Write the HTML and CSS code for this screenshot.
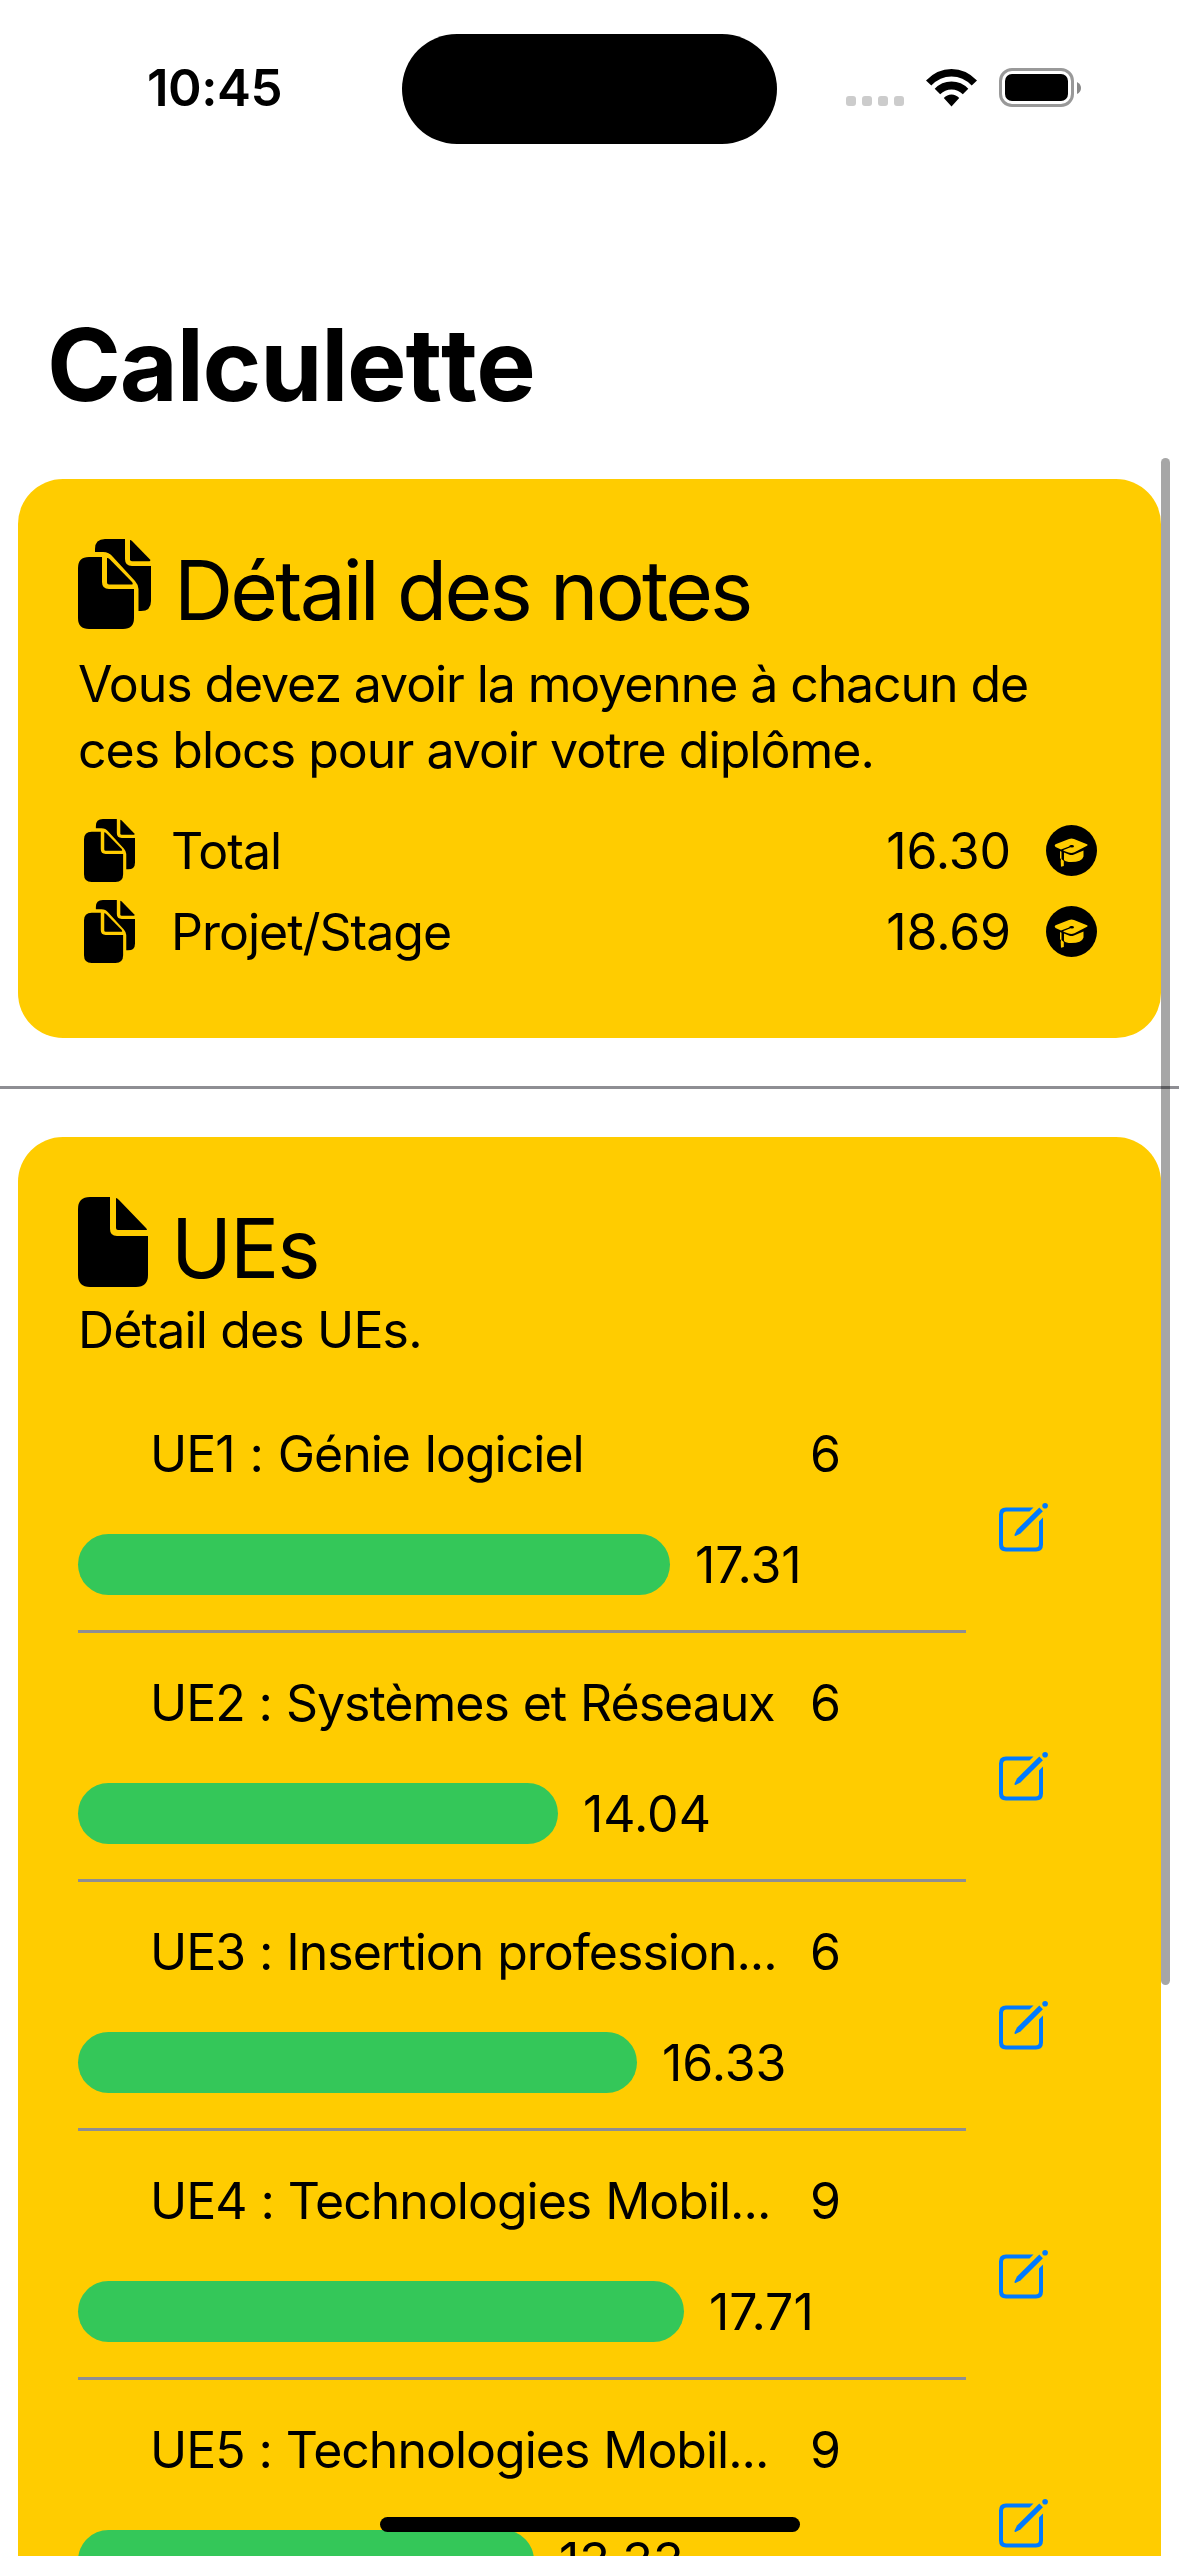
FILE: index.html
```html
<!DOCTYPE html>
<html lang="fr">
<head>
<meta charset="utf-8">
<title>Calculette</title>
<link rel="stylesheet" href="styles.css">
</head>
<body>
<svg class="sprite" aria-hidden="true">
  <symbol id="docs" viewBox="0 0 73 90">
    <path d="M17 13V10Q17 0 27 0H47V20Q47 27 54 27H73V62Q73 72 63 72H60.500V50Q60.500 46 57 42L35 18Q31 13 25 13Z"/>
    <path d="M52 1Q53 1 54 2L72 20.500Q73 22.300 71.500 22.300H54Q52 22.300 52 20.500Z"/>
    <path d="M11 18H24V43Q24 50 31 50H56V79Q56 90 45 90H11Q0 90 0 79V29Q0 18 11 18Z"/>
    <path d="M29 19Q30 18.500 31.500 20L54 43Q55.500 45.500 54 45.500H31Q29 45.500 29 43.500Z"/>
  </symbol>
  <symbol id="doc" viewBox="0 0 70 90">
    <path d="M12 0H32V32Q32 39 39 39H70V78Q70 90 58 90H12Q0 90 0 78V12Q0 0 12 0Z"/>
    <path d="M38 1Q39 1 41 3L67 30Q70 33 68.500 33H40Q38 33 38 31Z"/>
  </symbol>
  <symbol id="cap" viewBox="0 0 51 51">
    <circle cx="25.500" cy="25.500" r="25.500"/>
    <g class="cut">
      <path d="M9.500 19.200L23 14Q25.500 13 28 14L41 19.300Q42.500 20 41 20.800L28.500 27.300Q25.500 28.500 22.500 27.500L17.500 25.700V24.900L24.500 22.300Q28 22.800 28 21.200Q27.500 19.500 25 20Q23.500 20.300 23 21.500L15 24.600L9.500 22Q7.800 20.500 9.500 19.200Z"/>
      <path d="M18 27.500L23.500 29.700Q25.500 30.500 28 29.500L37.500 25.500V31.500Q36 37 25 37Q20 37 18 35Z"/>
      <path d="M14 26L15.500 26.700V34L17.800 36V41L15 41.800L14.700 36L15 34.500L14 33Z"/>
    </g>
  </symbol>
  <symbol id="edit" viewBox="0 0 49 49">
    <path d="M7 4.500H34.500L30.500 8.500H7.500Q4 8.500 4 12V41Q4 44.500 7.500 44.500H36.500Q40 44.500 40 41V18.500L44 14.500V41.500Q44 48.500 37 48.500H7Q0 48.500 0 41.500V11.500Q0 4.500 7 4.500Z"/>
    <path d="M40.300 4.500L43.900 8.200L21.500 30.400L16.500 32.900Q15.200 33 15.600 31.600L18 26.600Z"/>
    <circle cx="46.100" cy="2.800" r="2.800"/>
  </symbol>
</svg>
<div class="screen">
  <header class="status">
    <span class="clock">10:45</span>
    <div class="island"></div>
    <div class="indicators">
      <div class="cell"><i></i><i></i><i></i><i></i></div>
      <svg class="wifi" viewBox="0 0 51 38"><path d="M0 11.500Q11 0 25.500 0T51 11.500L45.700 16.500Q37 7.500 25.500 7.500T5.300 16.500ZM8.700 19.800Q15.500 12.500 25.500 12.500T42.300 19.800L36.800 25.300Q32 20.500 25.500 20.500T14.200 25.300ZM17.800 29Q21 25.500 25.500 25.500T33.200 29L25.500 37.500Z"/></svg>
      <div class="battery"><div class="charge"></div></div>
      <svg class="tip" viewBox="0 0 4 12"><path d="M0 0Q4 2 4 6T0 12Z"/></svg>
    </div>
  </header>
  <h1>Calculette</h1>

  <section class="card">
    <div class="head"><svg class="docs-lg"><use href="#docs"/></svg><h2 class="t-notes">Détail des notes</h2></div>
    <p class="desc intro">Vous devez avoir la moyenne à chacun de<br><span class="last">ces blocs pour avoir votre diplôme.</span></p>
    <div class="sum"><svg class="docs-sm"><use href="#docs"/></svg><span class="name">Total</span><span class="val">16.30</span><svg class="badge"><use href="#cap"/></svg></div>
    <div class="sum"><svg class="docs-sm"><use href="#docs"/></svg><span class="name">Projet/Stage</span><span class="val">18.69</span><svg class="badge"><use href="#cap"/></svg></div>
  </section>

  <hr>

  <section class="card ues">
    <div class="head"><svg class="doc-lg"><use href="#doc"/></svg><h2 class="t-ues">UEs</h2></div>
    <p class="desc">Détail des UEs.</p>
    <div class="list">
      <article class="ue">
        <div class="main">
          <div class="row"><span class="label first">UE1 : Génie logiciel</span><span class="coef">6</span></div>
          <div class="gauge"><div class="bar" style="width:592px"></div><span class="score">17.31</span></div>
        </div>
        <svg class="edit"><use href="#edit"/></svg>
      </article>
      <article class="ue">
        <div class="main">
          <div class="row"><span class="label">UE2 : Systèmes et Réseaux</span><span class="coef">6</span></div>
          <div class="gauge"><div class="bar" style="width:480px"></div><span class="score">14.04</span></div>
        </div>
        <svg class="edit"><use href="#edit"/></svg>
      </article>
      <article class="ue">
        <div class="main">
          <div class="row"><span class="label">UE3 : Insertion profession...</span><span class="coef">6</span></div>
          <div class="gauge"><div class="bar" style="width:559px"></div><span class="score">16.33</span></div>
        </div>
        <svg class="edit"><use href="#edit"/></svg>
      </article>
      <article class="ue">
        <div class="main">
          <div class="row"><span class="label">UE4 : Technologies Mobil...</span><span class="coef">9</span></div>
          <div class="gauge"><div class="bar" style="width:606px"></div><span class="score">17.71</span></div>
        </div>
        <svg class="edit"><use href="#edit"/></svg>
      </article>
      <article class="ue">
        <div class="main">
          <div class="row"><span class="label">UE5 : Technologies Mobil...</span><span class="coef">9</span></div>
          <div class="gauge"><div class="bar" style="width:456px"></div><span class="score">13.33</span></div>
        </div>
        <svg class="edit"><use href="#edit"/></svg>
      </article>
    </div>
  </section>
  <div class="scrollbar"></div>
  <div class="home"></div>
</div>
</body>
</html>
```
FILE: styles.css
```css
* { box-sizing: border-box; margin: 0; padding: 0; }
body { background: #fff; color: #000; font-family: Inter, "Liberation Sans", sans-serif; font-feature-settings: "calt" 0, "liga" 0, "dlig" 0; }
svg { display: block; flex: none; }
.sprite { position: absolute; width: 0; height: 0; }
.screen { position: relative; width: 1179px; height: 2556px; overflow: hidden; }

.status { display: flex; height: 177px; padding-top: 33px; }
.clock { width: 255px; margin-left: 147px; font-size: 51px; line-height: 60px; font-weight: 600; padding-top: 25px; letter-spacing: -0.5px; }
.island { flex: none; width: 375px; height: 110.500px; margin-top: 0.500px; border-radius: 56px; background: #000; }
.indicators { display: flex; margin-left: 69px; padding-top: 35px; }
.cell { display: flex; gap: 6px; padding-top: 28px; width: 80px; }
.cell i { width: 10px; height: 10px; border-radius: 3px; background: #ccc; }
.wifi { width: 51px; height: 38px; margin-top: 1px; }
.battery { width: 75px; height: 39px; margin-left: 22px; border: 3px solid #999; border-radius: 13px; padding: 3px; }
.charge { height: 27px; border-radius: 7px; background: #000; }
.tip { width: 4px; height: 12px; margin: 14px 0 0 3px; fill: #888; }

h1 { height: 302px; padding: 128px 0 0 47px; font-size: 100px; line-height: 120px; font-weight: 700; letter-spacing: -1.2px; font-kerning: none; white-space: nowrap; }

.card { width: 1143px; height: 559px; margin-left: 18px; padding: 60px; border-radius: 45px; background: #fc0; }
.card.ues { height: 1500px; margin-top: 48px; }
.head { display: flex; height: 90px; }
.docs-lg { width: 73px; height: 90px; }
.doc-lg { width: 70px; height: 90px; }
h2 { font-size: 82px; line-height: 100px; font-weight: 400; white-space: nowrap; }
.t-notes { margin: 2px 0 0 23px; letter-spacing: -2.85px; }
.t-ues { margin: 2px 0 0 23px; letter-spacing: -2px; }
.desc { font-size: 50px; line-height: 66px; margin-top: 22px; white-space: nowrap; letter-spacing: -0.85px; }
.intro { height: 168px; letter-spacing: -1.1px; }
.last { letter-spacing: -0.97px; }
.ues .desc { margin-top: 10px; }

.sum { display: flex; align-items: center; height: 63px; margin-bottom: 18px; padding: 0 4px 0 6px; font-size: 50px; line-height: 60px; }
.docs-sm { width: 51px; height: 63px; }
.name { margin-left: 36px; flex: 1; letter-spacing: -1px; }
.val { letter-spacing: -0.1px; }
.badge { width: 51px; height: 51px; margin-left: 35px; }
.cut { fill: #fc0; }

hr { border: 0; height: 3px; margin-top: 48px; background: #8e8e93; }

.list { margin-top: 21px; }
.ue { display: flex; height: 249px; }
.main { width: 888px; height: 249px; border-bottom: 3px solid #8e8e93; padding-top: 40px; }
.row { display: flex; height: 110px; padding-left: 72px; font-size: 50px; line-height: 60px; letter-spacing: -1px; white-space: nowrap; }
.label { width: 660px; word-spacing: 0.8px; }
.label.first { letter-spacing: -1px; word-spacing: 1.8px; }
.gauge { display: flex; align-items: center; height: 61px; gap: 25px; font-size: 50px; line-height: 60px; }
.bar { height: 61px; border-radius: 30.500px; background: #34c759; }
.edit { width: 49px; height: 49px; margin: 119px 0 0 33px; fill: #007aff; }

.scrollbar { position: absolute; left: 1161px; top: 458px; width: 9px; height: 1527px; border-radius: 4.500px; background: rgba(0,0,0,.35); }
.home { position: absolute; left: 380px; top: 2517px; width: 420px; height: 15px; border-radius: 7.500px; background: #000; }
```
